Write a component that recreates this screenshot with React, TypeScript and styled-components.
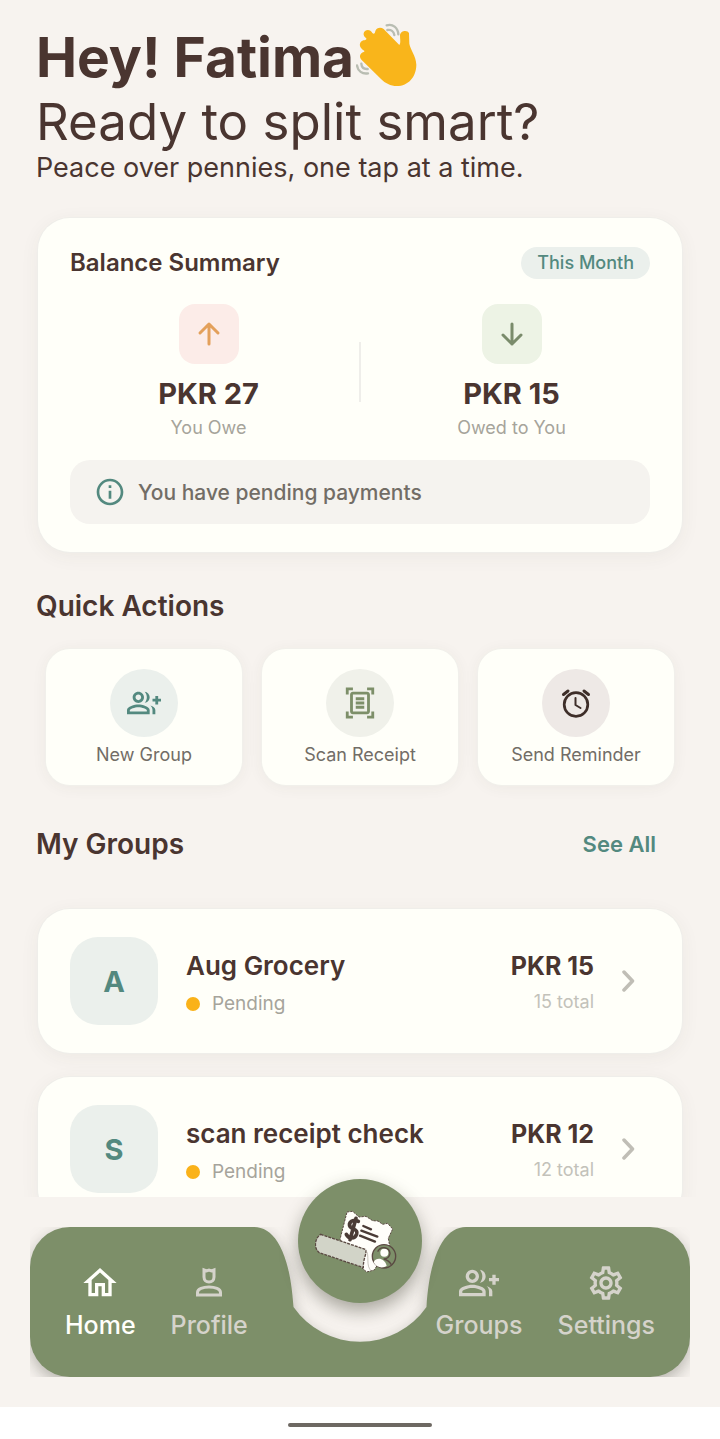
import React from "react";
import styled, { createGlobalStyle } from "styled-components";
import {
  MdInfoOutline,
  MdOutlineDocumentScanner,
  MdOutlineGroupAdd,
  MdOutlineHome,
  MdOutlineSettings,
} from "react-icons/md";

const color = {
  page: "#f7f3ef",
  card: "#fffff9",
  ink: "#4a3530",
  teal: "#53897f",
  mint: "#ebf0ec",
  sage: "#7d8f69",
  muted: "#726d66",
  faint: "#a6a49b",
  pale: "#c3c2ba",
};

const GlobalStyle = createGlobalStyle`
  *, *::before, *::after { box-sizing: border-box; }
  body {
    margin: 0;
    background: ${color.page};
    color: ${color.ink};
    font-family: Inter, "Liberation Sans", sans-serif;
  }
  h1, h2, h3, p, ul { margin: 0; padding: 0; }
  ul { list-style: none; }
  button { font: inherit; color: inherit; border: 0; padding: 0; background: none; cursor: pointer; }
  a { color: inherit; text-decoration: none; }
`;

const Screen = styled.div`
  display: flex;
  flex-direction: column;
  height: 100vh;
`;

const Content = styled.main`
  flex: 1;
  min-height: 0;
  overflow-y: auto;
  scrollbar-width: none;
  padding: 22px 36px 0;
`;

const Greeting = styled.header`
  display: flex;
  flex-direction: column;
  margin-bottom: 34px;
`;

const Hello = styled.h1`
  display: flex;
  align-items: flex-start;
  gap: 2px;
  font-size: 55px;
  font-weight: 700;
  line-height: 70px;
`;

const Tagline = styled.p`
  font-size: 51px;
  font-weight: 400;
  line-height: 60px;
`;

const Subline = styled.p`
  font-size: 27px;
  font-weight: 400;
  line-height: 32px;
`;

const Card = styled.section`
  margin: 0 2px;
  border-radius: 32px;
  background: ${color.card};
  box-shadow: 0 0 0 1px #efeeea, 0 4px 20px rgba(74, 64, 53, 0.06);
`;

const SummaryCard = styled(Card)`
  padding: 29px 32px 28px;
`;

const SummaryHeader = styled.div`
  display: flex;
  align-items: center;
  justify-content: space-between;
  margin-bottom: 25px;
`;

const SummaryTitle = styled.h2`
  font-size: 24px;
  font-weight: 600;
  line-height: 32px;
`;

const Period = styled.span`
  padding: 0 16px;
  border-radius: 16px;
  background: ${color.mint};
  color: ${color.teal};
  font-size: 18px;
  font-weight: 500;
  line-height: 32px;
`;

const Stats = styled.div`
  display: grid;
  grid-template-columns: 1fr 2px 1fr;
  column-gap: 12px;
  align-items: center;
  margin-bottom: 20px;
`;

const Divider = styled.span`
  height: 60px;
  background: #efeeea;
`;

const Stat = styled.div`
  display: flex;
  flex-direction: column;
  align-items: center;
`;

const StatIcon = styled.span<{ $tint: string }>`
  display: grid;
  place-items: center;
  width: 60px;
  height: 60px;
  margin-bottom: 12px;
  border-radius: 16px;
  background: ${(p) => p.$tint};
`;

const StatValue = styled.strong`
  font-size: 29px;
  font-weight: 700;
  line-height: 36px;
`;

const StatLabel = styled.span`
  margin-top: 4px;
  color: ${color.faint};
  font-size: 18px;
  line-height: 24px;
`;

const Notice = styled.p`
  display: flex;
  align-items: center;
  gap: 12px;
  height: 64px;
  padding: 0 24px;
  border-radius: 20px;
  background: #f5f3ef;
  color: ${color.muted};
  font-size: 21px;
  font-weight: 500;
  svg { color: ${color.teal}; }
`;

const SectionHeader = styled.div`
  display: flex;
  align-items: center;
  justify-content: space-between;
  padding-right: 28px;
`;

const SectionTitle = styled.h2`
  font-size: 28px;
  font-weight: 600;
  line-height: 36px;
`;

const Actions = styled.section`
  margin: 36px 0 41px;
`;

const ActionGrid = styled.div`
  display: grid;
  grid-template-columns: repeat(3, 1fr);
  gap: 20px;
  margin: 25px 10px 0;
`;

const ActionCard = styled.button`
  display: flex;
  flex-direction: column;
  align-items: center;
  gap: 6px;
  padding: 20px 0 18px;
  border-radius: 24px;
  background: ${color.card};
  box-shadow: 0 0 0 1px #f1f0eb, 0 2px 16px rgba(74, 64, 53, 0.06);
  color: ${color.muted};
  font-size: 18px;
  line-height: 24px;
`;

const ActionIcon = styled.span<{ $tint: string; $ink: string }>`
  display: grid;
  place-items: center;
  width: 68px;
  height: 68px;
  border-radius: 50%;
  background: ${(p) => p.$tint};
  color: ${(p) => p.$ink};
`;

const SeeAll = styled.a`
  color: ${color.teal};
  font-size: 22px;
  font-weight: 600;
`;

const GroupList = styled.ul`
  display: grid;
  gap: 24px;
  margin-top: 47px;
  padding-bottom: 24px;
`;

const GroupCard = styled(Card).attrs({ as: "li" })``;

const GroupLink = styled.a`
  display: flex;
  align-items: center;
  padding: 28px 32px;
`;

const Avatar = styled.span`
  display: grid;
  place-items: center;
  width: 88px;
  height: 88px;
  margin-right: 28px;
  border-radius: 28px;
  background: ${color.mint};
  color: ${color.teal};
  font-size: 29px;
  font-weight: 700;
`;

const GroupText = styled.span`
  flex: 1;
  display: flex;
  flex-direction: column;
  gap: 6px;
  padding-top: 4px;
`;

const GroupName = styled.strong`
  font-size: 26px;
  font-weight: 600;
  line-height: 36px;
`;

const Status = styled.span`
  display: flex;
  align-items: center;
  gap: 12px;
  color: ${color.faint};
  font-size: 19px;
  line-height: 28px;
  &::before {
    content: "";
    width: 14px;
    height: 14px;
    border-radius: 50%;
    background: #fab219;
  }
`;

const Amounts = styled.span`
  display: flex;
  flex-direction: column;
  align-items: flex-end;
  gap: 6px;
  margin-right: 28px;
  padding-top: 4px;
`;

const Amount = styled.strong`
  font-size: 25px;
  font-weight: 700;
  line-height: 32px;
`;

const Total = styled.span`
  color: ${color.pale};
  font-size: 18px;
  line-height: 28px;
`;

const Chevron = styled.svg`
  margin-right: 14px;
`;

const Dock = styled.nav`
  position: relative;
  padding: 30px;
`;

const Bar = styled.div`
  position: relative;
  overflow: hidden;
`;

const BarShape = styled.div`
  position: absolute;
  inset: 0;
  display: flex;
  filter: drop-shadow(0 6px 8px rgba(60, 60, 50, 0.35));
  svg { display: block; margin: 0 -1px; }
`;

const BarEnd = styled.span<{ $side: "left" | "right" }>`
  flex: 1;
  background: ${color.sage};
  border-radius: ${(p) => (p.$side === "left" ? "40px 0 0 40px" : "0 40px 40px 0")};
`;

const BarItems = styled.div`
  position: relative;
  display: flex;
  justify-content: space-between;
  height: 150px;
  padding: 36px 35px 0;
`;

const BarGroup = styled.div`
  display: flex;
  align-items: flex-start;
  gap: 35px;
`;

const Tab = styled.a<{ $active?: boolean }>`
  display: flex;
  flex-direction: column;
  align-items: center;
  gap: 4px;
  color: ${(p) => (p.$active ? "#fffffb" : "#d5d3cb")};
  font-size: 25px;
  font-weight: 500;
  line-height: 36px;
`;

const ScanButton = styled.button`
  position: absolute;
  top: -18px;
  left: calc(50% - 62px);
  display: grid;
  place-items: center;
  width: 124px;
  height: 124px;
  border-radius: 50%;
  background: ${color.sage};
  box-shadow: 0 8px 18px rgba(50, 50, 35, 0.4);
`;

const SystemBar = styled.footer`
  display: grid;
  place-items: center;
  padding: 16px 0 12px;
  background: #fff;
`;

const Handle = styled.span`
  width: 144px;
  height: 4px;
  border-radius: 2px;
  background: #6d6862;
`;

const WavingHand = () => (
  <svg width="64" height="66" viewBox="48 36 192 198" fill="none" aria-hidden="true">
    <g stroke="#b9bdb2" strokeWidth="7" strokeLinecap="round">
      <path d="M140 46C158 40 174 53 175 73" />
      <path d="M142 60C153 58 161 65 163 75" />
      <path d="M51 166C53 183 67 193 84 190" />
      <path d="M64 161C65 172 72 178 83 177" />
    </g>
    <path
      fill="#f9b51b"
      d="M76 62C84 57 93 61 97 69C102 74 105 70 106 63C110 52 123 51 131 57L178 105C183 99 180 88 180 76C181 62 203 59 207 70L208 101C211 119 228 137 229 164C229 201 204 228 171 228C151 228 136 220 123 207L65 150C56 140 60 130 71 126C75 124 74 122 68 119C55 109 58 95 70 91C79 89 82 87 77 83C69 77 69 67 76 62Z"
    />
  </svg>
);

const AlarmClock = () => (
  <svg
    width="34"
    height="34"
    viewBox="0 0 34 34"
    fill="none"
    stroke="currentColor"
    strokeLinecap="round"
    strokeLinejoin="round"
    aria-hidden="true"
  >
    <circle cx="17" cy="18.500" r="11.800" strokeWidth="2.700" />
    <path d="M16.500 12V19L21.500 22" strokeWidth="2" />
    <path d="M4.500 8.500L9 5M29.500 8.500L25 5" strokeWidth="3" />
  </svg>
);

const CrownedPerson = () => (
  <svg
    width="40"
    height="40"
    viewBox="0 0 40 40"
    fill="none"
    stroke="currentColor"
    strokeWidth="3"
    strokeLinejoin="miter"
    aria-hidden="true"
  >
    <path d="M15 7L17.500 8L20 7L22.500 8L25 7V14C25 17 23 19 20 19C17 19 15 17 15 14Z" />
    <path d="M8.500 32V29.500C8.500 26 14 24 20 24C26 24 31.500 26 31.500 29.500V32Z" />
  </svg>
);

const ReceiptScan = () => (
  <svg width="90" height="70" viewBox="75 108 270 210" aria-hidden="true">
    <path
      d="M171 126L188 124L207 141L228 139L248 152L264 153L278 163L293 160L308 177L295 205L302 244L266 279L253 300L230 306L216 294L150 208Z"
      fill="#fffefa"
      stroke="#5a4942"
      strokeWidth="3"
      strokeDasharray="7 3"
    />
    <path
      d="M92 193L226 238C233 248 219 264 220 293L88 248C70 235 74 205 92 193Z"
      fill="#d2d4c8"
      stroke="#5a4942"
      strokeWidth="4"
      strokeDasharray="9 3"
    />
    <path d="M226 240C242 252 224 287 245 304" fill="none" stroke="#aaa69c" strokeWidth="2" />
    <g fill="none" stroke="#4a3b36" strokeLinecap="round">
      <path d="M205 154C188 145 173 158 181 171C188 181 204 175 200 192C195 208 176 207 169 193M198 145L180 209" strokeWidth="11" />
      <path d="M220 168L243 178M214 182L262 200M210 197L255 215" strokeWidth="7" />
    </g>
    <circle cx="282" cy="259" r="35" fill={color.sage} stroke="#5a4942" strokeWidth="4" />
    <circle cx="283" cy="248" r="12" fill="#fffefa" />
    <path d="M251 276C259 261 283 263 290 287C278 297 257 292 251 276Z" fill="#fffefa" />
    <path d="M263 245C273 226 298 231 300 250C299 260 291 267 281 267C294 270 300 276 304 284" fill="none" stroke="#5a4942" strokeWidth="4" />
  </svg>
);

const Arrow = ({ down, stroke }: { down?: boolean; stroke: string }) => (
  <svg
    width="32"
    height="32"
    viewBox="0 0 32 32"
    fill="none"
    stroke={stroke}
    strokeWidth="3"
    strokeLinecap="round"
    strokeLinejoin="round"
    aria-hidden="true"
  >
    {down ? <path d="M16 6V26M7 17L16 26L25 17" /> : <path d="M16 26V6M7 15L16 6L25 15" />}
  </svg>
);

const groups = [
  { initial: "A", name: "Aug Grocery", amount: "PKR 15", total: "15 total" },
  { initial: "S", name: "scan receipt check", amount: "PKR 12", total: "12 total" },
];

export default function App() {
  return (
    <Screen>
      <GlobalStyle />
      <Content>
        <Greeting>
          <Hello>
            Hey! Fatima
            <WavingHand />
          </Hello>
          <Tagline>Ready to split smart?</Tagline>
          <Subline>Peace over pennies, one tap at a time.</Subline>
        </Greeting>

        <SummaryCard>
          <SummaryHeader>
            <SummaryTitle>Balance Summary</SummaryTitle>
            <Period>This Month</Period>
          </SummaryHeader>
          <Stats>
            <Stat>
              <StatIcon $tint="#fcece8"><Arrow stroke="#e3a05b" /></StatIcon>
              <StatValue>PKR 27</StatValue>
              <StatLabel>You Owe</StatLabel>
            </Stat>
            <Divider />
            <Stat>
              <StatIcon $tint="#edf3e5"><Arrow down stroke="#7a8b6b" /></StatIcon>
              <StatValue>PKR 15</StatValue>
              <StatLabel>Owed to You</StatLabel>
            </Stat>
          </Stats>
          <Notice>
            <MdInfoOutline size={32} />
            You have pending payments
          </Notice>
        </SummaryCard>

        <Actions>
          <SectionTitle>Quick Actions</SectionTitle>
          <ActionGrid>
            <ActionCard type="button">
              <ActionIcon $tint={color.mint} $ink={color.teal}><MdOutlineGroupAdd size={34} /></ActionIcon>
              New Group
            </ActionCard>
            <ActionCard type="button">
              <ActionIcon $tint="#f0f1ea" $ink={color.sage}><MdOutlineDocumentScanner size={34} /></ActionIcon>
              Scan Receipt
            </ActionCard>
            <ActionCard type="button">
              <ActionIcon $tint="#eee9e6" $ink="#3e2e29"><AlarmClock /></ActionIcon>
              Send Reminder
            </ActionCard>
          </ActionGrid>
        </Actions>

        <section>
          <SectionHeader>
            <SectionTitle>My Groups</SectionTitle>
            <SeeAll href="#groups">See All</SeeAll>
          </SectionHeader>
          <GroupList>
            {groups.map((g) => (
              <GroupCard key={g.name}>
                <GroupLink href="#group">
                  <Avatar>{g.initial}</Avatar>
                  <GroupText>
                    <GroupName>{g.name}</GroupName>
                    <Status>Pending</Status>
                  </GroupText>
                  <Amounts>
                    <Amount>{g.amount}</Amount>
                    <Total>{g.total}</Total>
                  </Amounts>
                  <Chevron width="14" height="24" viewBox="0 0 14 24" fill="none" stroke="#c0beb6" strokeWidth="3.500" strokeLinecap="round" strokeLinejoin="round" aria-hidden="true">
                    <path d="M2 3L10.500 12L2 21" />
                  </Chevron>
                </GroupLink>
              </GroupCard>
            ))}
          </GroupList>
        </section>
      </Content>

      <Dock aria-label="Main">
        <Bar>
          <BarShape>
            <BarEnd $side="left" />
            <svg width="240" height="150" viewBox="0 0 240 150" aria-hidden="true">
              <path
                fill={color.sage}
                d="M0 0H14C34 0 50 24 53.500 80A81 81 0 0 0 186.500 80C190 24 206 0 226 0H240V150H0Z"
              />
            </svg>
            <BarEnd $side="right" />
          </BarShape>
          <BarItems>
            <BarGroup>
              <Tab href="#home" $active aria-current="page"><MdOutlineHome size={40} />Home</Tab>
              <Tab href="#profile"><CrownedPerson />Profile</Tab>
            </BarGroup>
            <BarGroup>
              <Tab href="#groups"><MdOutlineGroupAdd size={40} />Groups</Tab>
              <Tab href="#settings"><MdOutlineSettings size={40} />Settings</Tab>
            </BarGroup>
          </BarItems>
        </Bar>
        <ScanButton type="button" aria-label="Scan a receipt"><ReceiptScan /></ScanButton>
      </Dock>
      <SystemBar><Handle /></SystemBar>
    </Screen>
  );
}
